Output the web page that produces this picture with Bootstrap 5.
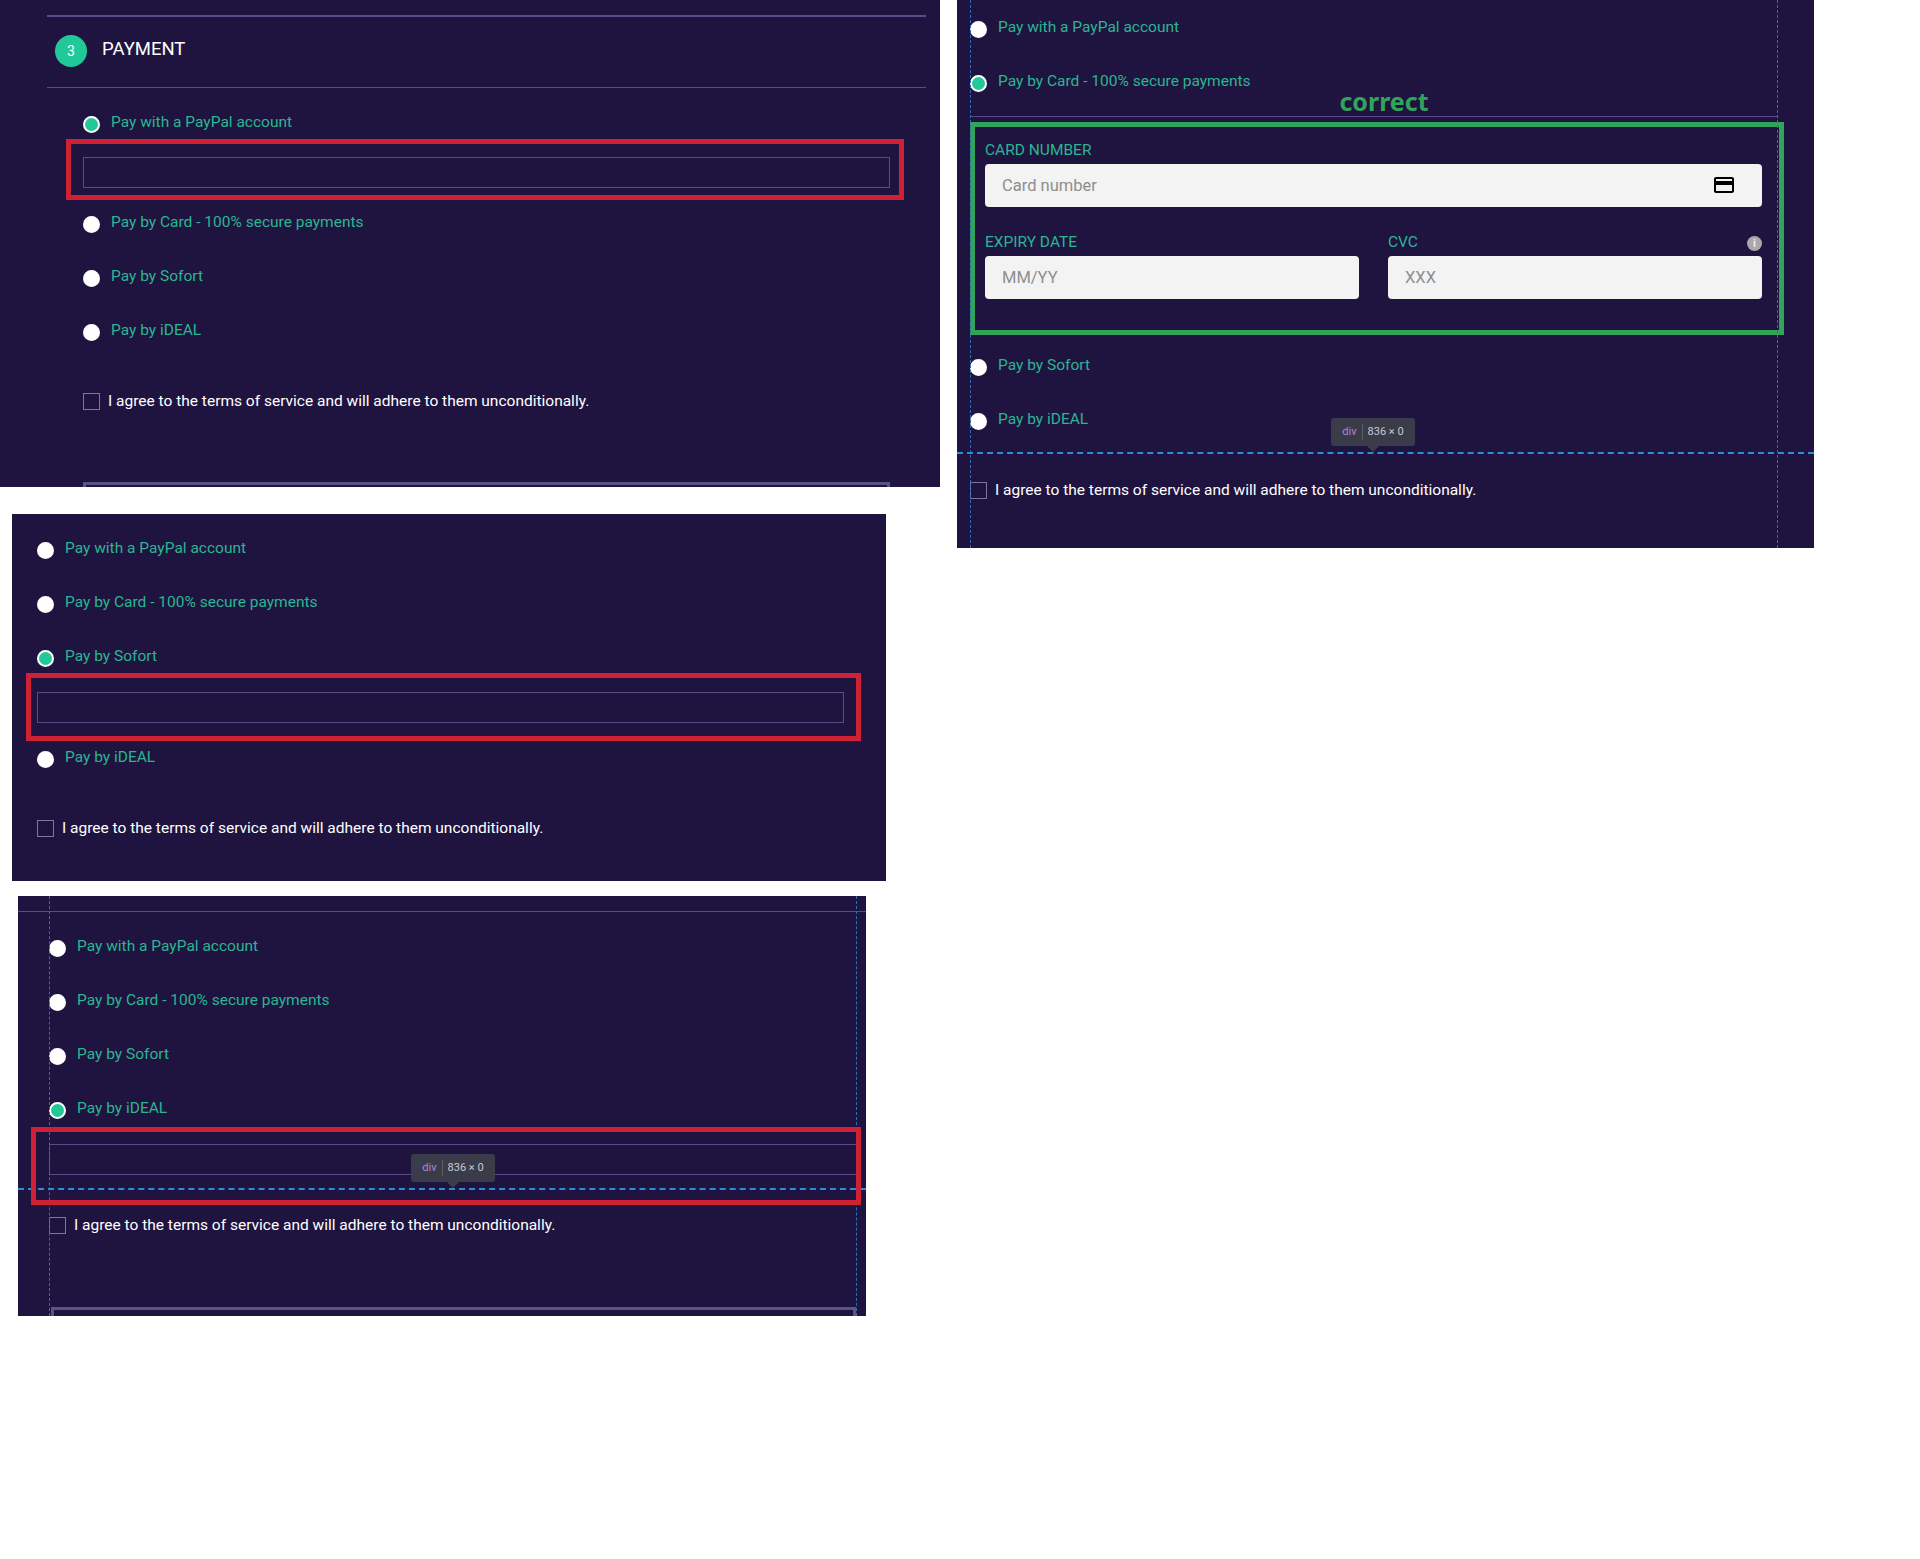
<!DOCTYPE html>
<html lang="en">
<head>
  <meta charset="UTF-8">
  <title>Payment step screenshots</title>
  <link href="https://cdn.jsdelivr.net/npm/bootstrap@5.3.3/dist/css/bootstrap.min.css" rel="stylesheet">
  <style>
    body { background: #fff; font-family: Roboto, "Liberation Sans", sans-serif; font-size: 14px; }
    .shot-left { width: 940px; }
    .shot-right { width: 857px; margin-left: 17px; height: 548px; padding: 18px 0 0 13px; }
    .shot { position: relative; overflow: hidden; background: #1f143f; color: #fff; }
    .shot-a { height: 487px; padding: 15px 14px 0 47px; }
    .shot-c { width: 874px; height: 367px; margin: 27px 0 0 12px; padding: 25px 0 0 25px; }
    .shot-d { width: 848px; height: 420px; margin: 15px 0 0 18px; padding-top: 15px; }
    .shot-d .pay-list { margin: 25px 0 0 31px; }
    .shot-a .pay-list { margin: 25px 0 0 36px; }

    .pay-rule { border-top: 1px solid #574c85; }
    .pay-rule-thick { border-top-width: 2px; }
    .pay-head { height: 70px; padding: 0 0 2px 8px; font-size: 18.5px; }
    .pay-head-text { margin-bottom: 2px; }
    .pay-step { width: 32px; height: 32px; background: #20c997; font-size: 14px; margin-right: 15px; }

    .pay-list { width: 807px; }
    .pay-opt { height: 44px; margin-bottom: 10px; color: #2bb592; font-size: 15.5px; line-height: 18px; }
    .pay-opt.is-open { height: 45px; margin-bottom: 0; }
    .shot-a .pay-opt.is-open, .shot-right .pay-opt.is-open { height: 44px; }
    .pay-opt .form-check-input { flex: none; width: 17px; height: 17px; margin: 3px 11px 0 0; border: 2px solid #fff; background-color: #fff; background-image: none; }
    .pay-opt .form-check-input:checked { background-color: #20c997; border-color: #fff; background-image: none; }
    .pay-box { height: 31px; margin-bottom: 25px; border: 1px solid #574c85; }
    .shot-d .pay-box { margin-bottom: 41px; border-right: 0; }
    .pay-agree { font-size: 15.5px; line-height: 18px; margin-top: 27px; }
    .pay-agree .form-check-input { flex: none; width: 17px; height: 17px; margin: 0 8px 0 0; border: 1px solid #7f7799; border-radius: 0; background-color: transparent; }
    .shot-d .pay-agree { margin-top: 0; }
    .pay-bar { height: 12px; border: 3px solid #5b5384; border-bottom: 0; }
    .shot-a .pay-bar { margin-top: 72px; }
    .shot-d .pay-bar { margin: 73px 0 0 2px; width: 805px; }

    .card-form { height: 239px; padding: 24px 0 0 15px; }
    .card-field { width: 777px; margin-bottom: 26px; }
    .card-half { width: 374px; }
    .card-label { color: #2bb592; font-size: 15.5px; line-height: 18px; margin-bottom: 5px; }
    .card-input { height: 43px; padding: 0 17px; border: 0; border-radius: 4px; background: #f3f3f3; font-size: 16.5px; }
    .card-input::placeholder { color: #8e8e8e; }
    .card-icon { position: absolute; right: 26px; top: 9px; }
    .card-info { width: 15px; height: 15px; background: #a9a9ad; color: #eee; font-size: 11px; font-weight: 700; line-height: 1; }

    .mark-red, .mark-green { position: absolute; border: 5px solid #cf2133; }
    .mark-green { border-color: #2fa45a; left: 13px; top: 122px; width: 814px; height: 213px; }
    .mark-word { position: absolute; left: 382px; top: 85px; width: 90px; text-align: center; color: #2fa45a; font: 700 25px/32px "Noto Sans", sans-serif; }
    .red-a { left: 66px; top: 139px; width: 838px; height: 61px; }
    .red-c { left: 14px; top: 159px; width: 835px; height: 68px; }
    .red-d { left: 13px; top: 231px; width: 830px; height: 78px; }

    .guide-v { position: absolute; top: 0; bottom: 0; border-left: 1px dashed #2f6fb8; }
    .guide-h { position: absolute; left: 0; right: 0; border-top: 2px dashed #2a8fd4; }
    .guide-tip { position: absolute; width: 84px; height: 28px; background: #3b3c4a; border-radius: 3px; color: #c9c9cf; font-size: 11px; }
    .guide-tip::after { content: ""; position: absolute; left: 36px; bottom: -6px; border: 6px solid transparent; border-bottom: 0; border-top-color: #3b3c4a; }
    .guide-tip b { font-weight: 400; color: #b583d6; padding-right: 5px; margin-right: 5px; border-right: 1px solid #5d5e6c; }
  </style>
</head>
<body>

<div class="d-flex align-items-start">
  <div class="shot-left">

    <!-- first shot: paypal -->
    <div class="shot shot-a">
      <div class="pay-rule pay-rule-thick"></div>
      <div class="pay-head d-flex align-items-center">
        <span class="pay-step rounded-circle d-flex align-items-center justify-content-center">3</span>
        <span class="pay-head-text">PAYMENT</span>
      </div>
      <div class="pay-rule"></div>
      <div class="pay-list">
        <label class="pay-opt is-open d-flex"><input class="form-check-input" type="radio" name="a" checked>Pay with a PayPal account</label>
        <div class="pay-box"></div>
        <label class="pay-opt d-flex"><input class="form-check-input" type="radio" name="a">Pay by Card - 100% secure payments</label>
        <label class="pay-opt d-flex"><input class="form-check-input" type="radio" name="a">Pay by Sofort</label>
        <label class="pay-opt d-flex"><input class="form-check-input" type="radio" name="a">Pay by iDEAL</label>
        <label class="pay-agree d-flex align-items-center"><input class="form-check-input" type="checkbox">I agree to the terms of service and will adhere to them unconditionally.</label>
        <div class="pay-bar"></div>
      </div>
      <div class="mark-red red-a"></div>
    </div>

    <!-- second shot: sofort -->
    <div class="shot shot-c">
      <div class="pay-list">
        <label class="pay-opt d-flex"><input class="form-check-input" type="radio" name="c">Pay with a PayPal account</label>
        <label class="pay-opt d-flex"><input class="form-check-input" type="radio" name="c">Pay by Card - 100% secure payments</label>
        <label class="pay-opt is-open d-flex"><input class="form-check-input" type="radio" name="c" checked>Pay by Sofort</label>
        <div class="pay-box"></div>
        <label class="pay-opt d-flex"><input class="form-check-input" type="radio" name="c">Pay by iDEAL</label>
        <label class="pay-agree d-flex align-items-center"><input class="form-check-input" type="checkbox">I agree to the terms of service and will adhere to them unconditionally.</label>
      </div>
      <div class="mark-red red-c"></div>
    </div>

    <!-- third shot: ideal, with devtools overlay -->
    <div class="shot shot-d">
      <div class="pay-rule"></div>
      <div class="pay-list">
        <label class="pay-opt d-flex"><input class="form-check-input" type="radio" name="d">Pay with a PayPal account</label>
        <label class="pay-opt d-flex"><input class="form-check-input" type="radio" name="d">Pay by Card - 100% secure payments</label>
        <label class="pay-opt d-flex"><input class="form-check-input" type="radio" name="d">Pay by Sofort</label>
        <label class="pay-opt is-open d-flex"><input class="form-check-input" type="radio" name="d" checked>Pay by iDEAL</label>
        <div class="pay-box"></div>
        <label class="pay-agree d-flex align-items-center"><input class="form-check-input" type="checkbox">I agree to the terms of service and will adhere to them unconditionally.</label>
        <div class="pay-bar"></div>
      </div>
      <div class="guide-v" style="left: 31px"></div>
      <div class="guide-v" style="left: 838px"></div>
      <div class="guide-h" style="top: 292px"></div>
      <div class="guide-tip d-flex align-items-center justify-content-center" style="left: 393px; top: 258px"><b>div</b>836 × 0</div>
      <div class="mark-red red-d"></div>
    </div>
  </div>

  <!-- the correct one: card -->
  <div class="shot shot-right">
    <div class="pay-list">
      <label class="pay-opt d-flex"><input class="form-check-input" type="radio" name="b">Pay with a PayPal account</label>
      <label class="pay-opt is-open d-flex"><input class="form-check-input" type="radio" name="b" checked>Pay by Card - 100% secure payments</label>
      <div class="pay-rule"></div>
      <div class="card-form">
        <div class="card-field">
          <div class="card-label">CARD NUMBER</div>
          <div class="position-relative">
            <input class="form-control card-input" type="text" placeholder="Card number">
            <svg class="card-icon" width="24" height="24" viewBox="0 0 24 24" fill="#000"><path d="M20 4H4c-1.11 0-1.99.89-1.99 2L2 18c0 1.11.89 2 2 2h16c1.11 0 2-.89 2-2V6c0-1.11-.89-2-2-2zm0 14H4v-6h16v6zm0-10H4V6h16v2z"/></svg>
          </div>
        </div>
        <div class="card-field d-flex justify-content-between">
          <div class="card-half">
            <div class="card-label">EXPIRY DATE</div>
            <input class="form-control card-input" type="text" placeholder="MM/YY">
          </div>
          <div class="card-half">
            <div class="card-label d-flex justify-content-between align-items-end">CVC <span class="card-info rounded-circle d-flex align-items-center justify-content-center">i</span></div>
            <input class="form-control card-input" type="text" placeholder="XXX">
          </div>
        </div>
      </div>
      <label class="pay-opt d-flex"><input class="form-check-input" type="radio" name="b">Pay by Sofort</label>
      <label class="pay-opt d-flex"><input class="form-check-input" type="radio" name="b">Pay by iDEAL</label>
      <label class="pay-agree d-flex align-items-center"><input class="form-check-input" type="checkbox">I agree to the terms of service and will adhere to them unconditionally.</label>
    </div>
    <div class="mark-word">correct</div>
    <div class="mark-green"></div>
    <div class="guide-v" style="left: 13px"></div>
    <div class="guide-v" style="left: 820px"></div>
    <div class="guide-h" style="top: 452px"></div>
    <div class="guide-tip d-flex align-items-center justify-content-center" style="left: 374px; top: 418px"><b>div</b>836 × 0</div>
  </div>
</div>

<script src="https://cdn.jsdelivr.net/npm/bootstrap@5.3.3/dist/js/bootstrap.bundle.min.js"></script>
</body>
</html>
